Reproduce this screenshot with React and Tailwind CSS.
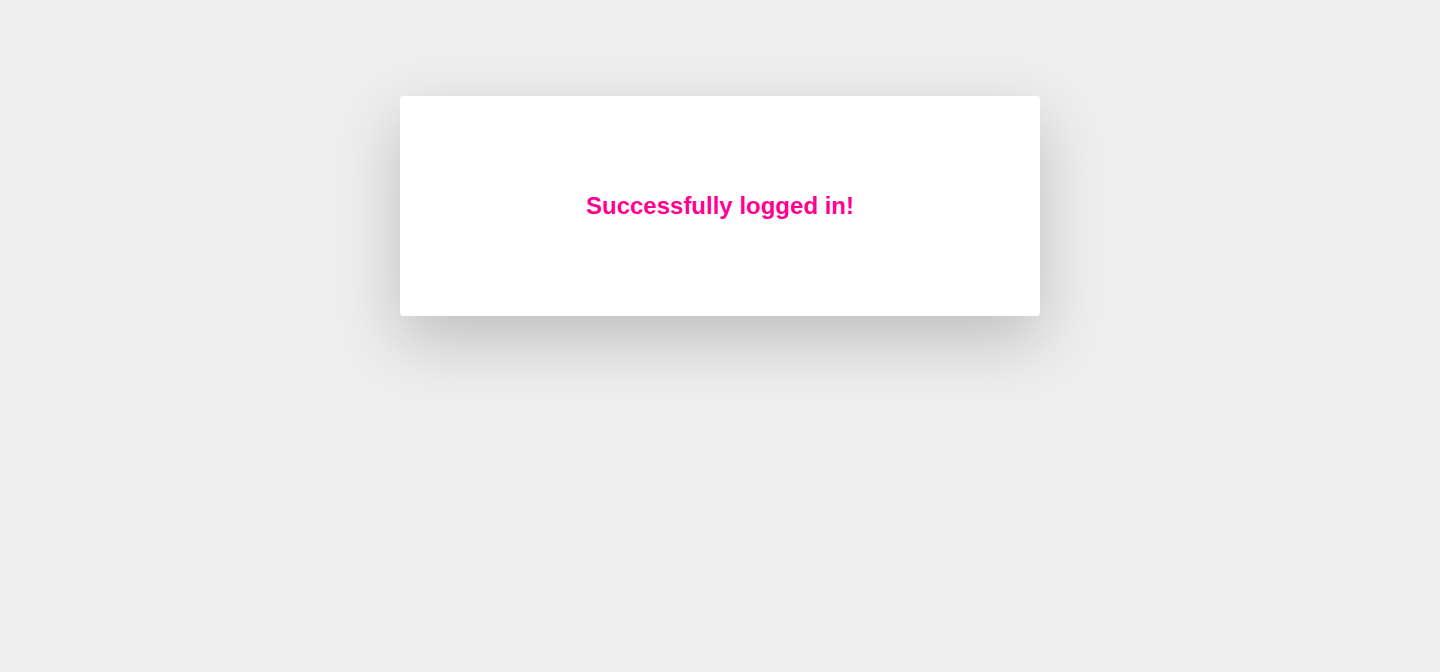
export default function App() {
    return (
        <div className="min-h-screen bg-[#eeeeee] pt-24" style={{ fontFamily: '"Liberation Sans", Arial, sans-serif' }}>
            <div className="mx-auto w-[640px] h-[220px] bg-white rounded flex items-center justify-center shadow-[0_24px_64px_rgba(0,0,0,0.2)]">
                <h1 className="text-2xl font-bold text-[#ff0090]">Successfully logged in!</h1>
            </div>
        </div>
    );
}
